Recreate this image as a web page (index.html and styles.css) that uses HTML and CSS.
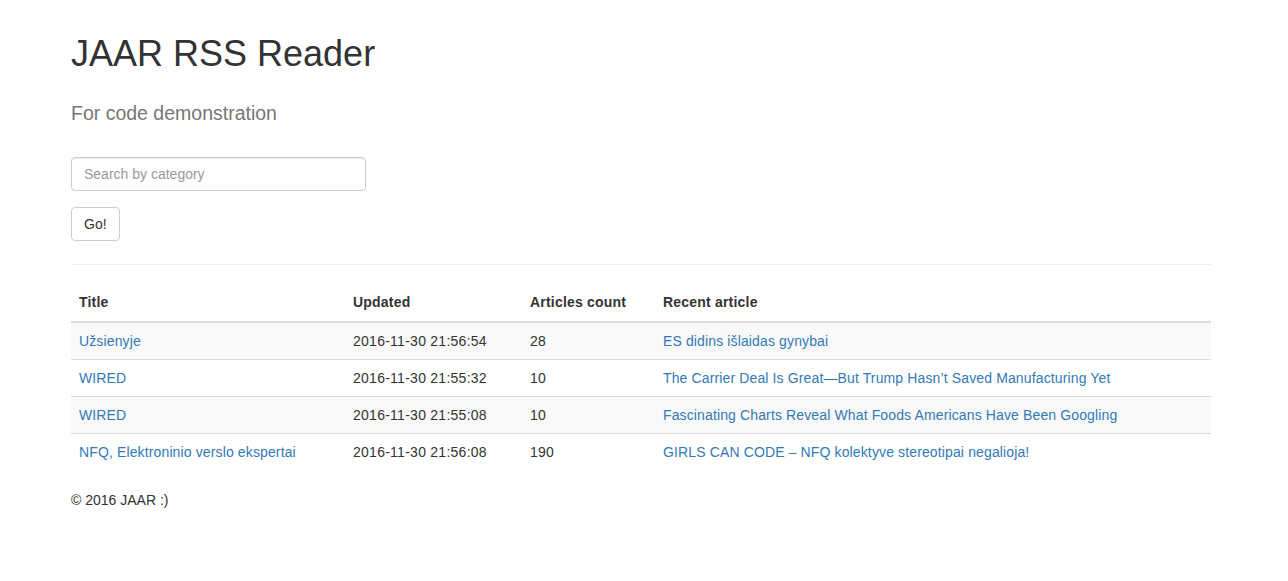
FILE: index.html
```html
<!DOCTYPE html>
<html lang="en">
<head>
<meta charset="utf-8">
<title>JAAR RSS Reader</title>
<link rel="stylesheet" href="styles.css">
</head>
<body>
<div class="container">
  <header class="page-head">
    <h1 class="title">JAAR RSS Reader</h1>
    <p class="lead">For code demonstration</p>
  </header>
  <form class="search-form">
    <input class="form-control" type="text" placeholder="Search by category">
    <button class="btn" type="button">Go!</button>
  </form>
  <hr class="divider">
  <table class="table">
    <thead>
      <tr>
        <th class="col-title">Title</th>
        <th class="col-updated">Updated</th>
        <th class="col-count">Articles count</th>
        <th class="col-recent">Recent article</th>
      </tr>
    </thead>
    <tbody>
      <tr>
        <td><a href="#">Užsienyje</a></td>
        <td class="num">2016-11-30 21:56:54</td>
        <td class="num">28</td>
        <td><a href="#">ES didins išlaidas gynybai</a></td>
      </tr>
      <tr>
        <td><a href="#">WIRED</a></td>
        <td class="num">2016-11-30 21:55:32</td>
        <td class="num">10</td>
        <td><a href="#">The Carrier Deal Is Great—But Trump Hasn’t Saved Manufacturing Yet</a></td>
      </tr>
      <tr>
        <td><a href="#">WIRED</a></td>
        <td class="num">2016-11-30 21:55:08</td>
        <td class="num">10</td>
        <td><a href="#">Fascinating Charts Reveal What Foods Americans Have Been Googling</a></td>
      </tr>
      <tr>
        <td><a href="#">NFQ, Elektroninio verslo ekspertai</a></td>
        <td class="num">2016-11-30 21:56:08</td>
        <td class="num">190</td>
        <td><a href="#">GIRLS CAN CODE – NFQ kolektyve stereotipai negalioja!</a></td>
      </tr>
    </tbody>
  </table>
  <footer class="footer">© 2016 JAAR :)</footer>
</div>
</body>
</html>
```

FILE: styles.css
```css
* { box-sizing: border-box; }
html, body { margin: 0; padding: 0; }
body {
  font-family: "Liberation Sans", Arial, Helvetica, sans-serif;
  font-size: 14px;
  line-height: 20px;
  color: #333;
  background: #fff;
}
a { color: #337ab7; text-decoration: none; }
.container {
  width: 1140px;
  margin-left: 71px;
  padding-top: 34px;
}
.title {
  margin: 0;
  font-size: 36px;
  line-height: 39.6px;
  font-weight: 500;
  color: #333;
}
.lead {
  margin: 26px 0 0;
  font-size: 19.5px;
  line-height: 27.3px;
  color: #777;
  font-weight: 400;
}
.search-form {
  margin-top: 30px;
  display: flex;
  flex-direction: column;
  align-items: flex-start;
  gap: 16px;
}
.form-control {
  width: 295px;
  height: 34px;
  padding: 6px 12px;
  font-family: inherit;
  font-size: 14px;
  line-height: 20px;
  color: #555;
  border: 1px solid #ccc;
  border-radius: 4px;
  box-shadow: inset 0 1px 1px rgba(0,0,0,.075);
  background: #fff;
}
.form-control::placeholder { color: #999; }
.btn {
  height: 34px;
  padding: 6px 12px;
  font-family: inherit;
  font-size: 14px;
  line-height: 20px;
  color: #333;
  background: #fff;
  border: 1px solid #ccc;
  border-radius: 4px;
}
.divider {
  margin: 23px 0 20px;
  border: 0;
  border-top: 1px solid #eee;
  height: 0;
}
.table {
  width: 100%;
  border-collapse: collapse;
  border-spacing: 0;
  margin-bottom: 20px;
  letter-spacing: 0.13px;
}
.table th, .table td {
  padding: 8px;
  line-height: 20px;
  text-align: left;
  vertical-align: top;
}
.table th {
  font-weight: bold;
  vertical-align: bottom;
  padding-top: 7px;
  padding-bottom: 9px;
  border-bottom: 2px solid #ddd;
  letter-spacing: 0.2px;
}
.table td { border-top: 1px solid #ddd; }
.table td.num { letter-spacing: 0.26px; }
.table tbody tr:nth-child(odd) { background: #f9f9f9; }
.col-title { width: 274px; }
.col-updated { width: 177px; }
.col-count { width: 133px; }
.footer {
  line-height: 20px;
}
```
